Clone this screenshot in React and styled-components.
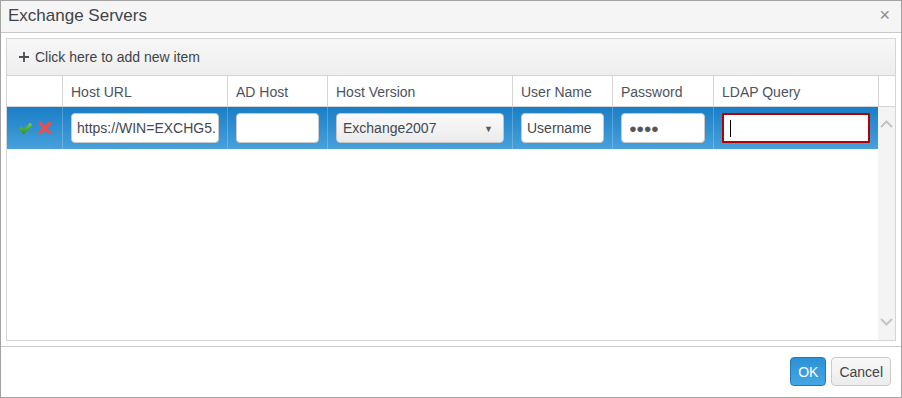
import React from "react";
import styled, { createGlobalStyle } from "styled-components";

const GlobalStyle = createGlobalStyle`
  html, body {
    margin: 0;
    padding: 0;
    background: #ffffff;
  }
  * {
    box-sizing: border-box;
  }
  body {
    font-family: "Liberation Sans", Arial, sans-serif;
  }
`;

const COLUMNS = "55px 165px 100px 185px 100px 101px 165px 17px";

const Window = styled.div`
  width: 902px;
  height: 398px;
  border: 1px solid #a3a3a3;
  background: #ffffff;
  display: flex;
  flex-direction: column;
`;

const TitleBar = styled.div`
  height: 32px;
  flex: none;
  display: flex;
  align-items: center;
  justify-content: space-between;
  padding: 0 11px 0 7px;
  background: #f5f5f5;
  border-bottom: 1px solid #c9c9c9;
`;

const Title = styled.span`
  font-size: 17px;
  color: #3f4449;
  margin-top: -1px;
`;

const CloseButton = styled.span`
  font-size: 18px;
  color: #8a8a8a;
  line-height: 1;
  margin-top: -3px;
`;

const Content = styled.div`
  flex: 1;
  padding: 5px;
  display: flex;
`;

const Grid = styled.div`
  flex: 1;
  border: 1px solid #d5d5d5;
  display: flex;
  flex-direction: column;
`;

const Toolbar = styled.div`
  height: 37px;
  flex: none;
  display: flex;
  align-items: center;
  gap: 6px;
  padding: 0 0 0 12px;
  background: linear-gradient(#f7f7f7, #eeeeee);
  border-bottom: 1px solid #d5d5d5;
  font-size: 14px;
  color: #3f4449;
`;

const HeaderRow = styled.div`
  display: grid;
  grid-template-columns: ${COLUMNS};
  height: 31px;
  flex: none;
  border-bottom: 1px solid #d5d5d5;
`;

const HeaderCell = styled.div`
  display: flex;
  align-items: center;
  padding: 1px 0 0 8px;
  font-size: 14px;
  color: #4d535c;
  border-left: ${(p) => (p.$first ? "none" : "1px solid #d5d5d5")};
`;

const Body = styled.div`
  flex: 1;
  display: flex;
`;

const Rows = styled.div`
  flex: 1;
`;

const DataRow = styled.div`
  display: grid;
  grid-template-columns: 55px 165px 100px 185px 100px 101px 165px;
  height: 42px;
  background: linear-gradient(#1a7ec7, #47a1dc);
`;

const DataCell = styled.div`
  display: flex;
  align-items: center;
  padding: 0 8px;
  border-left: ${(p) => (p.$first ? "none" : "1px solid rgba(255,255,255,0.22)")};
  justify-content: ${(p) => (p.$center ? "center" : "flex-start")};
  gap: 5px;
`;

const TextBox = styled.div`
  width: 100%;
  height: 30px;
  display: flex;
  align-items: center;
  padding: 0 2px 0 5px;
  background: #ffffff;
  border: ${(p) => (p.$invalid ? "2px solid #b50000" : "1px solid #c9c9c9")};
  border-radius: ${(p) => (p.$invalid ? "1px" : "4px")};
  font-size: 14px;
  color: #434850;
  white-space: nowrap;
  overflow: hidden;
`;

const Caret = styled.span`
  width: 1px;
  height: 17px;
  margin-left: 1px;
  background: #000000;
`;

const Dots = styled.span`
  font-size: 13px;
  letter-spacing: -0.5px;
  margin-left: 2px;
  margin-top: 1px;
  color: #50565e;
`;

const SelectBox = styled.div`
  width: 100%;
  height: 30px;
  display: flex;
  align-items: center;
  justify-content: space-between;
  padding: 0 10px 0 6px;
  background: linear-gradient(#fafafa, #ebebeb);
  border: 1px solid #c5c5c5;
  border-radius: 4px;
  font-size: 14px;
  color: #434850;
`;

const Arrow = styled.span`
  font-size: 9px;
  color: #555b63;
  margin-top: 2px;
`;

const ScrollBar = styled.div`
  width: 17px;
  flex: none;
  background: #f4f4f4;
  display: flex;
  flex-direction: column;
  justify-content: space-between;
  align-items: center;
  padding: 13px 0 14px;
`;

const Footer = styled.div`
  height: 51px;
  flex: none;
  border-top: 1px solid #c9c9c9;
  display: flex;
  justify-content: flex-end;
  align-items: flex-start;
  gap: 5px;
  padding: 10px 10px 0 0;
`;

const Button = styled.button`
  height: 29px;
  padding: 0 7px;
  font-family: "Liberation Sans", Arial, sans-serif;
  font-size: 14px;
  border-radius: 4px;
  color: ${(p) => (p.$primary ? "#ffffff" : "#3f4449")};
  border: 1px solid ${(p) => (p.$primary ? "#2578b8" : "#c9c9c9")};
  background: ${(p) =>
    p.$primary
      ? "linear-gradient(#2b92d6, #45a6e4)"
      : "linear-gradient(#f8f8f8, #ececec)"};
`;

function PlusIcon() {
  return (
    <svg width="10" height="10" viewBox="0 0 10 10">
      <path d="M5 0 V10 M0 5 H10" stroke="#4a4f56" strokeWidth="1.8" />
    </svg>
  );
}

function CheckIcon() {
  return (
    <svg width="15" height="13" viewBox="0 0 15 13">
      <defs>
        <linearGradient id="chk" x1="0" y1="0" x2="0" y2="1">
          <stop offset="0" stopColor="#7bd33a" />
          <stop offset="1" stopColor="#2f8f14" />
        </linearGradient>
      </defs>
      <path
        d="M0.8 7 L3.4 4.8 L5.8 7.4 L12 0.8 L14.4 3 L5.9 12.2 Z"
        fill="url(#chk)"
      />
    </svg>
  );
}

function CancelIcon() {
  return (
    <svg width="14" height="14" viewBox="0 0 14 14">
      <path
        d="M2.4 2.4 L11.6 11.6 M11.6 2.4 L2.4 11.6"
        stroke="#ef4d4d"
        strokeWidth="3.4"
        strokeLinecap="round"
      />
    </svg>
  );
}

function Chevron({ down }) {
  return (
    <svg width="13" height="8" viewBox="0 0 13 8">
      <path
        d={down ? "M1 1 L6.5 6.5 L12 1" : "M1 7 L6.5 1.5 L12 7"}
        fill="none"
        stroke="#c4c4c4"
        strokeWidth="2"
      />
    </svg>
  );
}

const headers = [
  "",
  "Host URL",
  "AD Host",
  "Host Version",
  "User Name",
  "Password",
  "LDAP Query",
  "",
];

export default function App() {
  return (
    <>
      <GlobalStyle />
      <Window>
        <TitleBar>
          <Title>Exchange Servers</Title>
          <CloseButton>×</CloseButton>
        </TitleBar>
        <Content>
          <Grid>
            <Toolbar>
              <PlusIcon />
              <span>Click here to add new item</span>
            </Toolbar>
            <HeaderRow>
              {headers.map((h, i) => (
                <HeaderCell key={i} $first={i === 0}>
                  {h}
                </HeaderCell>
              ))}
            </HeaderRow>
            <Body>
              <Rows>
                <DataRow>
                  <DataCell $first $center>
                    <CheckIcon />
                    <CancelIcon />
                  </DataCell>
                  <DataCell>
                    <TextBox>https://WIN=EXCHG5.</TextBox>
                  </DataCell>
                  <DataCell>
                    <TextBox />
                  </DataCell>
                  <DataCell>
                    <SelectBox>
                      <span>Exchange2007</span>
                      <Arrow>▼</Arrow>
                    </SelectBox>
                  </DataCell>
                  <DataCell>
                    <TextBox>Username</TextBox>
                  </DataCell>
                  <DataCell>
                    <TextBox>
                      <Dots>●●●●</Dots>
                    </TextBox>
                  </DataCell>
                  <DataCell>
                    <TextBox $invalid>
                      <Caret />
                    </TextBox>
                  </DataCell>
                </DataRow>
              </Rows>
              <ScrollBar>
                <Chevron />
                <Chevron down />
              </ScrollBar>
            </Body>
          </Grid>
        </Content>
        <Footer>
          <Button $primary>OK</Button>
          <Button>Cancel</Button>
        </Footer>
      </Window>
    </>
  );
}
